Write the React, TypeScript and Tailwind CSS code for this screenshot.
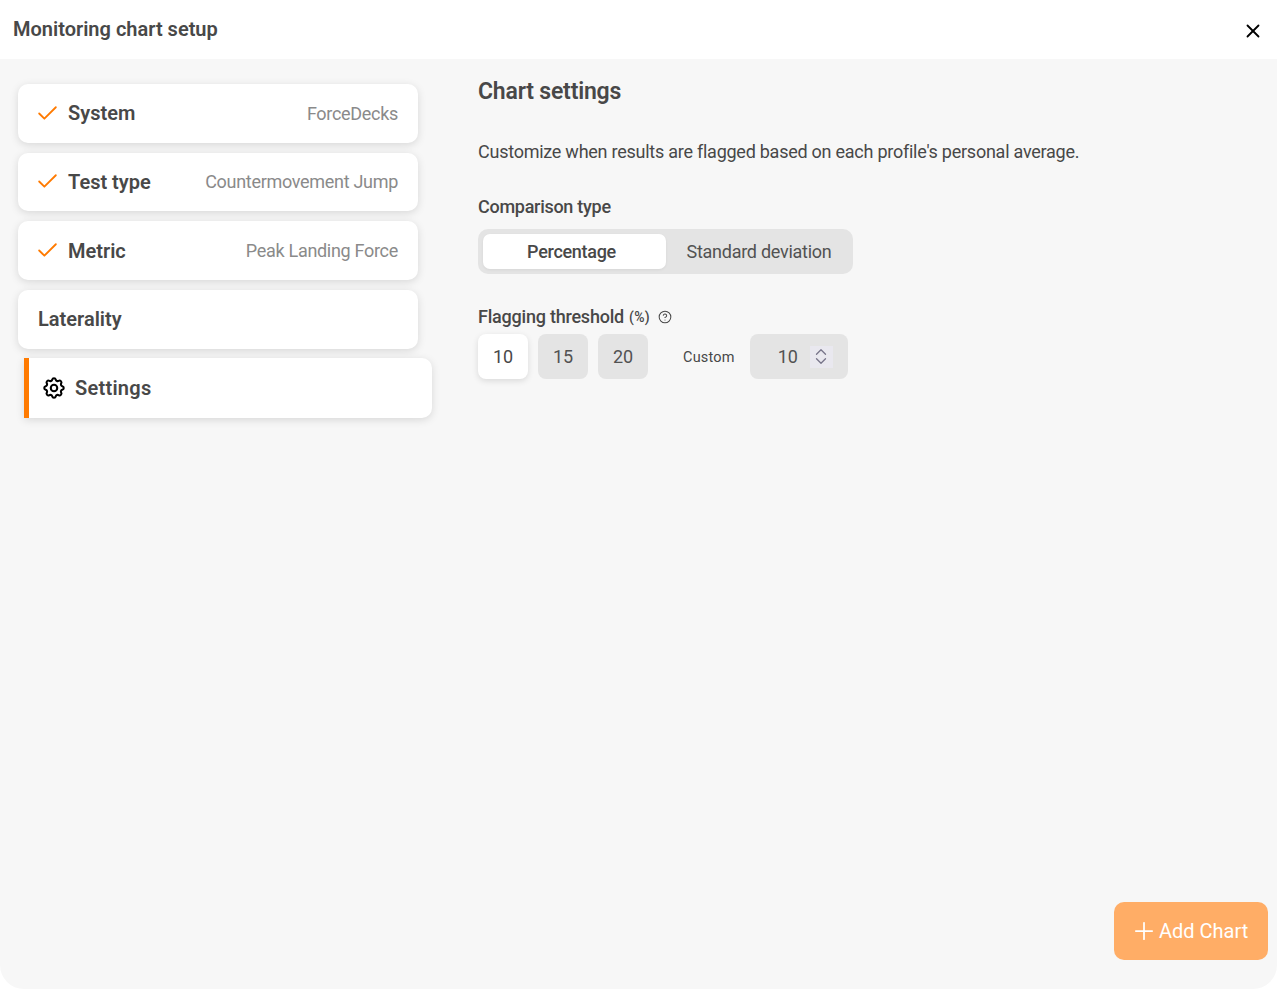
import { Check, ChevronDown, ChevronUp, CircleHelp, Plus, X } from "lucide-react";
import { TbSettings } from "react-icons/tb";

const steps = [
  { label: "System", value: "ForceDecks" },
  { label: "Test type", value: "Countermovement Jump" },
  { label: "Metric", value: "Peak Landing Force" },
];

const StepCard = ({ label, value }: { label: string; value: string }) => (
  <div className="flex h-[58.67px] items-center justify-between rounded-[10px] bg-white pl-[17px] pr-[20px] shadow-[0_2px_8px_rgba(0,0,0,0.13)]">
    <div className="flex items-center gap-[8px]">
      <Check className="h-[25px] w-[25px] text-[#ff7a00]" strokeWidth={1.75} />
      <span className="text-[20px] font-semibold text-[#484848]">{label}</span>
    </div>
    <span className="text-[18px] tracking-[-0.3px] text-[#8a8a8a]">{value}</span>
  </div>
);

export default function App() {
  return (
    <div className="flex h-[989px] w-[1277px] flex-col overflow-hidden bg-white font-['Roboto',sans-serif] text-[#484848]">
      <header className="flex h-[59px] shrink-0 items-center justify-between pl-[13px] pr-[13px]">
        <h1 className="-mt-[2px] text-[20px] font-semibold text-[#484848]">Monitoring chart setup</h1>
        <X className="mt-[3px] h-[22px] w-[22px] text-black" strokeWidth={2} />
      </header>

      <div className="relative flex flex-1 rounded-b-[24px] bg-[#f7f7f7]">
        <aside className="flex w-[478px] shrink-0 flex-col pl-[18px] pt-[25px]">
          <div className="flex w-[400px] flex-col gap-[10px]">
            {steps.map((s) => (
              <StepCard key={s.label} label={s.label} value={s.value} />
            ))}
            <div className="flex h-[58.67px] items-center rounded-[10px] bg-white pl-[20px] shadow-[0_2px_8px_rgba(0,0,0,0.13)]">
              <span className="text-[20px] font-semibold text-[#484848]">Laterality</span>
            </div>
          </div>
          <div className="ml-[6px] mt-[9px] flex h-[60px] w-[408px] items-center gap-[8px] rounded-r-[10px] border-l-[5px] border-[#ff7a00] bg-white pl-[12px] shadow-[0_2px_8px_rgba(0,0,0,0.13)]">
            <TbSettings className="h-[26px] w-[26px] text-black" strokeWidth={1.9} />
            <span className="text-[20px] font-semibold tracking-[0.25px] text-[#484848]">Settings</span>
          </div>
        </aside>

        <main className="flex-1 pt-[17px]">
          <h2 className="text-[23px] font-semibold leading-[32px] tracking-[-0.2px] text-[#484848]">Chart settings</h2>
          <p className="mt-[32px] text-[18px] leading-[24px] tracking-[-0.25px] text-[#484848]">
            Customize when results are flagged based on each profile's personal average.
          </p>

          <div className="mt-[31px] text-[18px] font-medium leading-[24px] tracking-[-0.28px]">Comparison type</div>
          <div className="mt-[10px] flex h-[45px] w-[375px] items-center rounded-[10px] bg-[#e4e4e4] p-[5px]">
            <div className="flex h-[35px] w-[183px] items-center justify-center rounded-[7px] bg-white pr-[6px] text-[18px] font-medium tracking-[-0.3px] shadow-[0_1px_3px_rgba(0,0,0,0.06)]">
              Percentage
            </div>
            <div className="flex h-[35px] flex-1 items-center justify-center pl-[4px] text-[18px] tracking-[-0.26px] text-[#525252]">
              Standard deviation
            </div>
          </div>

          <div className="mt-[31px] flex h-[24px] items-center text-[18px] font-medium leading-[24px] tracking-[-0.22px]">
            Flagging threshold
            <span className="ml-[5px] text-[14px] tracking-[0.35px]">(%)</span>
            <CircleHelp className="ml-[8px] h-[14px] w-[14px] text-[#484848]" strokeWidth={1.75} />
          </div>

          <div className="mt-[5px] flex items-center">
            <div className="flex h-[45px] w-[50px] items-center justify-center rounded-[8px] bg-white text-[18px] shadow-[0_2px_6px_rgba(0,0,0,0.12)]">
              10
            </div>
            <div className="ml-[10px] flex h-[45px] w-[50px] items-center justify-center rounded-[8px] bg-[#e4e4e4] text-[18px] text-[#525252]">
              15
            </div>
            <div className="ml-[10px] flex h-[45px] w-[50px] items-center justify-center rounded-[8px] bg-[#e4e4e4] text-[18px] text-[#525252]">
              20
            </div>
            <span className="ml-[35px] pt-[2px] text-[14.5px] tracking-[0.2px] text-[#484848]">Custom</span>
            <div className="ml-[15px] flex h-[45px] w-[98px] items-center rounded-[8px] bg-[#e4e4e4] pl-[28px]">
              <span className="w-[20px] text-[18px] text-[#525252]">10</span>
              <div className="ml-[12px] flex h-[22px] w-[23px] flex-col items-center justify-center bg-[#e9e8ef] text-[#77758a]">
                <ChevronUp className="-mb-[4.5px] h-[18px] w-[18px] shrink-0" strokeWidth={1.75} />
                <ChevronDown className="-mt-[4.5px] h-[18px] w-[18px] shrink-0" strokeWidth={1.75} />
              </div>
            </div>
          </div>
        </main>

        <button className="absolute bottom-[29px] right-[9px] flex h-[58px] w-[154px] items-center gap-[1px] rounded-[10px] bg-[#ffad66] pl-[16px] text-[20px] text-white">
          <Plus className="h-[28px] w-[28px]" strokeWidth={1.5} />
          Add Chart
        </button>
      </div>
    </div>
  );
}
